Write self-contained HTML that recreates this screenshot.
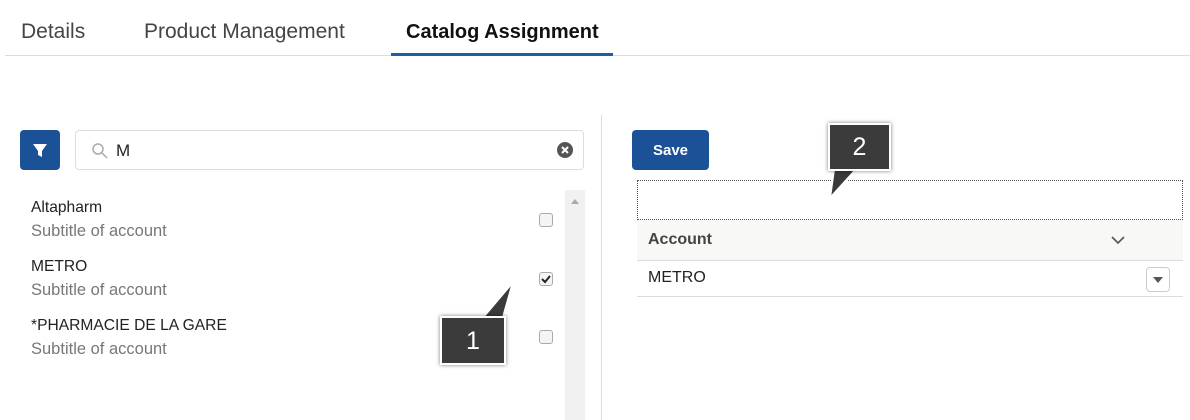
<!DOCTYPE html><html><head><style>
body{margin:0;width:1190px;height:420px;background:#fff;font-family:"Liberation Sans",sans-serif;position:relative;overflow:hidden;color:#222}
.a{position:absolute}
.tab{position:absolute;top:20px;font-size:21px;color:#444}
.cb{position:absolute;left:539px;width:12px;height:12px;border:1px solid #aaa;border-radius:3px;background:#f4f4f4}
.t{position:absolute;left:31px;font-size:15.6px;color:#222}
.s{position:absolute;left:31px;font-size:16.5px;color:#777}
.call{position:absolute;background:#3c3b3b;border:2px solid #fff;box-shadow:0 0 4px rgba(0,0,0,.5);color:#fff;font-size:25px;text-align:center}
</style></head><body>
<div class="tab" style="left:21px">Details</div>
<div class="tab" style="left:144px">Product Management</div>
<div class="tab" style="left:406px;color:#111;font-weight:bold;font-size:20px;top:21px">Catalog Assignment</div>
<div class="a" style="left:5px;top:55px;width:1185px;height:1px;background:#ddd"></div>
<div class="a" style="left:391px;top:53px;width:222px;height:3px;background:#1b5fa8"></div>
<div class="a" style="left:601px;top:115px;width:1px;height:305px;background:#ddd"></div>
<div class="a" style="left:20px;top:130px;width:40px;height:40px;background:#1b5297;border-radius:4px"><svg width="40" height="40"><path d="M13 14h14l-5 7v6l-4-2v-4z" fill="#fff"/></svg></div>
<div class="a" style="left:75px;top:130px;width:507px;height:38px;border:1px solid #ddd;border-radius:4px"><svg class="a" style="left:15px;top:11px" width="18" height="18"><circle cx="7" cy="7" r="5" fill="none" stroke="#aaa" stroke-width="1.5"/><path d="M11 11l5 5" stroke="#aaa" stroke-width="1.5"/></svg><span class="a" style="left:40px;top:10px;font-size:17px">M</span><svg class="a" style="left:481px;top:11px" width="16" height="16"><circle cx="8" cy="8" r="8" fill="#555"/><path d="M5 5l6 6M11 5l-6 6" stroke="#fff" stroke-width="2"/></svg></div>
<div class="a" style="left:565px;top:190px;width:20px;height:230px;background:#f1f1f1"></div>
<div class="a" style="left:571px;top:199px;border:4px solid transparent;border-bottom:5px solid #aaa;border-top:0"></div>
<div class="t" style="top:199px">Altapharm</div><div class="s" style="top:222px">Subtitle of account</div>
<div class="t" style="top:258px">METRO</div><div class="s" style="top:281px">Subtitle of account</div>
<div class="t" style="top:317px">*PHARMACIE DE LA GARE</div><div class="s" style="top:340px">Subtitle of account</div>
<div class="cb" style="top:213px"></div><div class="cb" style="top:272px"></div><div class="cb" style="top:330px"></div>
<svg class="a" style="left:539px;top:272px" width="14" height="14"><path d="M3 7l3 3 5-6" fill="none" stroke="#222" stroke-width="2"/></svg>
<svg class="a" style="left:440px;top:275px" width="80" height="50"><path d="M40 46L73 7 62 46z" fill="#3c3b3b" stroke="#fff" stroke-width="2"/></svg>
<div class="call" style="left:440px;top:316px;width:62px;height:45px;line-height:46px">1</div>
<div class="a" style="left:632px;top:130px;width:77px;height:40px;background:#1b5297;border-radius:4px;color:#fff;font-size:15px;font-weight:bold;text-align:center;line-height:42px">Save</div>
<div class="a" style="left:637px;top:180px;width:544px;height:38px;border:1px dotted #555"></div>
<svg class="a" style="left:815px;top:160px" width="60" height="42"><path d="M20 2L15 38 45 5z" fill="#3c3b3b" stroke="#fff" stroke-width="2"/></svg>
<div class="call" style="left:828px;top:123px;width:59px;height:44px;line-height:44px">2</div>
<div class="a" style="left:637px;top:220px;width:546px;height:40px;background:#f8f8f7;border-bottom:1px solid #ddd"></div>
<div class="a" style="left:648px;top:231px;font-size:16px;font-weight:bold;color:#444">Account</div>
<svg class="a" style="left:1110px;top:234px" width="16" height="12"><path d="M2 3l6 6 6-6" fill="none" stroke="#555" stroke-width="1.6"/></svg>
<div class="a" style="left:648px;top:269px;font-size:16px">METRO</div>
<div class="a" style="left:637px;top:296px;width:546px;height:1px;background:#ddd"></div>
<div class="a" style="left:1146px;top:267px;width:22px;height:23px;border:1px solid #ccc;border-radius:4px"><div class="a" style="left:6px;top:9px;border:5px solid transparent;border-top:6px solid #555;border-bottom:0"></div></div>
</body></html>
